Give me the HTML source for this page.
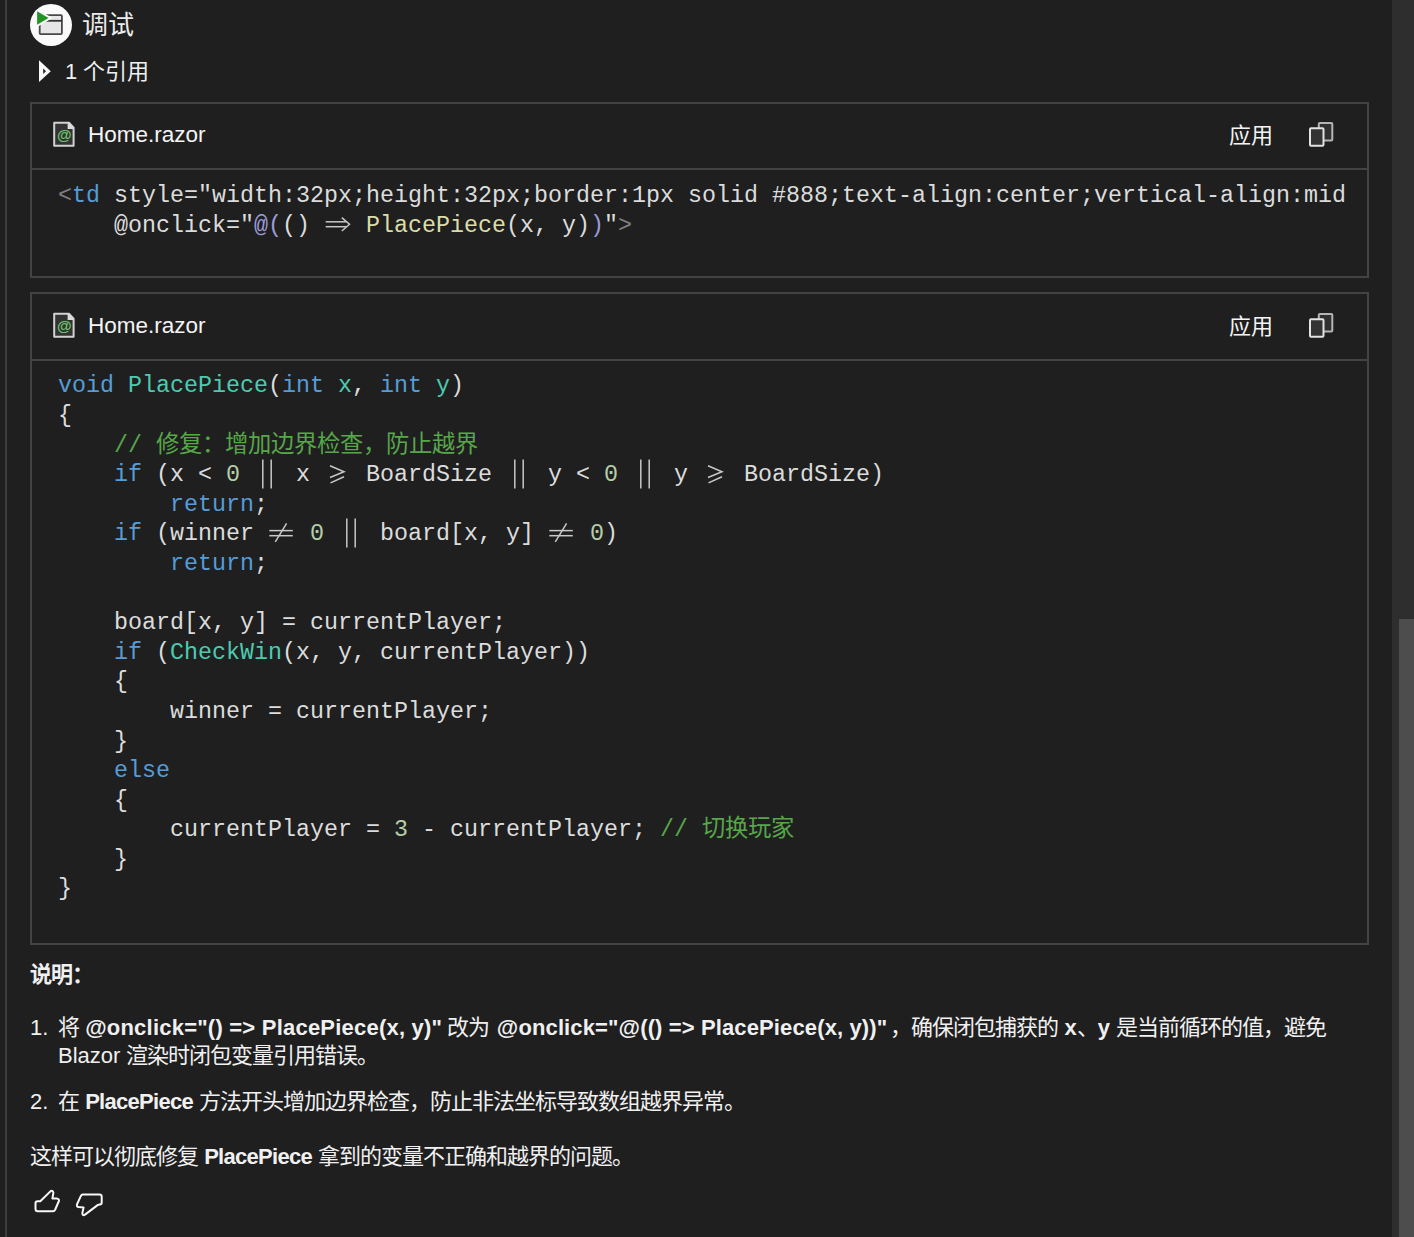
<!DOCTYPE html>
<html lang="zh-CN"><head><meta charset="utf-8">
<style>
html,body{margin:0;padding:0;}
body{width:1414px;height:1237px;overflow:hidden;background:#1f1f1f;position:relative;font-family:"Liberation Sans",sans-serif;color:#f0f0f0;}
.abs{position:absolute;}
#lline{left:5px;top:0;width:2px;height:1237px;background:#3d3d3d;}
#track{left:1392px;top:0;width:22px;height:1237px;background:#2e2e2e;}
#thumb{left:1399px;top:619px;width:15px;height:618px;background:#4d4d4d;}
.box{position:absolute;left:30px;width:1335px;border:2px solid #434343;}
.hdr{position:relative;height:64px;border-bottom:2px solid #434343;}
.h2>*{margin-top:1px;}
.fname{position:absolute;left:56px;top:16.5px;font-size:22.5px;line-height:28px;color:#f4f4f4;}
.apply{position:absolute;left:1197px;top:17.5px;font-size:22px;line-height:28px;color:#f4f4f4;}
.code{position:relative;font-family:"Liberation Mono",monospace;font-size:23.33px;line-height:29.6px;color:#dcdcdc;white-space:pre;padding-left:26px;}
.k{color:#569cd6}.t{color:#4ec9b0}.n{color:#b5cea8}.c{color:#57a64a}.g{color:#808080}.y{color:#dcdcaa}.p{color:#9b9bd8}
.lig{position:relative;}
.lig svg{position:absolute;left:0;top:19.4px;overflow:visible;stroke:#c8c8c8;stroke-width:1.5;}
.txt{position:absolute;left:30px;font-size:22px;line-height:28px;color:#f0f0f0;white-space:nowrap;}
b{font-weight:bold;}
.z{letter-spacing:-1px;}
.pp{letter-spacing:-0.7px;}
</style></head><body>
<div id="lline" class="abs"></div>
<div id="track" class="abs"></div>
<div id="thumb" class="abs"></div>

<!-- header -->
<svg class="abs" style="left:29px;top:3px" width="44" height="44" viewBox="0 0 44 44">
  <circle cx="22" cy="22" r="21" fill="#fafafa"/>
  <rect x="10.7" y="12.1" width="22.2" height="19" rx="1" fill="#e6e6e6" stroke="#484848" stroke-width="1.8"/>
  <line x1="10.7" y1="17.8" x2="32.9" y2="17.8" stroke="#333" stroke-width="1.8"/>
  <defs><clipPath id="cc"><circle cx="22" cy="22" r="21"/></clipPath></defs><polygon points="5.5,4.5 5.5,25.5 23.5,15" fill="#fafafa" clip-path="url(#cc)"/>
  <polygon points="8.1,8.2 8.1,21.8 19.5,15" fill="#239323"/>
</svg>
<div class="abs" style="left:82px;top:8px;font-size:26px;line-height:34px;color:#ececec;">调试</div>

<svg class="abs" style="left:36px;top:58px" width="18" height="26" viewBox="0 0 18 26">
  <path d="M3,2.2 L3,24 L14.8,13.2 Z M7.2,10.6 L7.2,15.9 L10,13.2 Z" fill="#f8f8f8" fill-rule="evenodd"/>
</svg>
<div class="abs" style="left:65px;top:58px;font-size:22px;line-height:28px;color:#f0f0f0;">1 个引用</div>

<!-- box 1 -->
<div class="box" style="top:102px;height:172px;">
  <div class="hdr">
        <div class="fname">Home.razor</div>
    <div class="apply">应用</div>
<svg class="abs" style="left:21px;top:17px" width="24" height="28" viewBox="0 0 24 28">
  <path d="M1.2,1.7 L16,1.7 L20.6,6.6 L20.6,24.7 L1.2,24.7 Z" fill="#333" stroke="#d2d2d2" stroke-width="2" stroke-linejoin="round"/>
  <polygon points="14.6,1.7 16,1.7 20.6,6.6 20.6,7.9 14.6,7.9" fill="#dcdcdc"/>
  <text x="11.2" y="19.3" text-anchor="middle" font-family="Liberation Sans" font-weight="bold" font-size="15" fill="#6cc46c">@</text>
</svg>
<svg class="abs" style="left:1274px;top:14px" width="30" height="30" viewBox="0 0 30 30">
  <rect x="12.8" y="4.9" width="13.5" height="17.5" rx="1" fill="#303030" stroke="#b4b4b4" stroke-width="2"/>
  <rect x="4" y="10.2" width="13.5" height="17.5" rx="1" fill="#333" stroke="#e2e2e2" stroke-width="2"/>
</svg>
  </div>
  <div class="code" style="padding-top:12.4px;"><span class="g">&lt;</span><span class="k">td</span> style="width:32px;height:32px;border:1px solid #888;text-align:center;vertical-align:mid
    @onclick="<span class="p">@(</span>() <span class="lig">  <svg width="28" height="40" viewBox="0 0 28 40"><line x1="1.7" y1="-10.2" x2="22" y2="-10.2"/><line x1="1.7" y1="-5.3" x2="22" y2="-5.3"/><polyline points="17.8,-14.4 25.5,-7.7 17.8,-1" fill="none"/></svg></span> <span class="y">PlacePiece</span>(x, y)<span class="p">)</span>"<span class="g">&gt;</span></div>
</div>

<!-- box 2 -->
<div class="box" style="top:292px;height:649px;">
  <div class="hdr h2" style="height:65px;">
    <div class="fname">Home.razor</div>
    <div class="apply">应用</div>
<svg class="abs" style="left:21px;top:17px" width="24" height="28" viewBox="0 0 24 28">
  <path d="M1.2,1.7 L16,1.7 L20.6,6.6 L20.6,24.7 L1.2,24.7 Z" fill="#333" stroke="#d2d2d2" stroke-width="2" stroke-linejoin="round"/>
  <polygon points="14.6,1.7 16,1.7 20.6,6.6 20.6,7.9 14.6,7.9" fill="#dcdcdc"/>
  <text x="11.2" y="19.3" text-anchor="middle" font-family="Liberation Sans" font-weight="bold" font-size="15" fill="#6cc46c">@</text>
</svg>
<svg class="abs" style="left:1274px;top:14px" width="30" height="30" viewBox="0 0 30 30">
  <rect x="12.8" y="4.9" width="13.5" height="17.5" rx="1" fill="#303030" stroke="#b4b4b4" stroke-width="2"/>
  <rect x="4" y="10.2" width="13.5" height="17.5" rx="1" fill="#333" stroke="#e2e2e2" stroke-width="2"/>
</svg>
  </div>
  <div class="code" style="padding-top:11.4px;"><span class="k">void</span> <span class="t">PlacePiece</span>(<span class="k">int</span> <span class="t">x</span>, <span class="k">int</span> <span class="t">y</span>)
{
    <span class="c">// 修复：增加边界检查，防止越界</span>
    <span class="k">if</span> (x &lt; <span class="n">0</span> <span class="lig">  <svg width="28" height="40" viewBox="0 0 28 40"><line x1="8.8" y1="-22.4" x2="8.8" y2="6.4"/><line x1="17.2" y1="-22.4" x2="17.2" y2="6.4"/></svg></span> x <span class="lig">  <svg width="28" height="40" viewBox="0 0 28 40"><polyline points="6,-16.3 20,-10.3 6,-4.5" fill="none"/><line x1="6.5" y1="0.9" x2="20" y2="-5.3"/></svg></span> BoardSize <span class="lig">  <svg width="28" height="40" viewBox="0 0 28 40"><line x1="8.8" y1="-22.4" x2="8.8" y2="6.4"/><line x1="17.2" y1="-22.4" x2="17.2" y2="6.4"/></svg></span> y &lt; <span class="n">0</span> <span class="lig">  <svg width="28" height="40" viewBox="0 0 28 40"><line x1="8.8" y1="-22.4" x2="8.8" y2="6.4"/><line x1="17.2" y1="-22.4" x2="17.2" y2="6.4"/></svg></span> y <span class="lig">  <svg width="28" height="40" viewBox="0 0 28 40"><polyline points="6,-16.3 20,-10.3 6,-4.5" fill="none"/><line x1="6.5" y1="0.9" x2="20" y2="-5.3"/></svg></span> BoardSize)
        <span class="k">return</span>;
    <span class="k">if</span> (winner <span class="lig">  <svg width="28" height="40" viewBox="0 0 28 40"><line x1="1.3" y1="-10.4" x2="24.8" y2="-10.4"/><line x1="1.3" y1="-5.3" x2="24.8" y2="-5.3"/><line x1="7.3" y1="0.8" x2="18.6" y2="-17.6"/></svg></span> <span class="n">0</span> <span class="lig">  <svg width="28" height="40" viewBox="0 0 28 40"><line x1="8.8" y1="-22.4" x2="8.8" y2="6.4"/><line x1="17.2" y1="-22.4" x2="17.2" y2="6.4"/></svg></span> board[x, y] <span class="lig">  <svg width="28" height="40" viewBox="0 0 28 40"><line x1="1.3" y1="-10.4" x2="24.8" y2="-10.4"/><line x1="1.3" y1="-5.3" x2="24.8" y2="-5.3"/><line x1="7.3" y1="0.8" x2="18.6" y2="-17.6"/></svg></span> <span class="n">0</span>)
        <span class="k">return</span>;

    board[x, y] = currentPlayer;
    <span class="k">if</span> (<span class="t">CheckWin</span>(x, y, currentPlayer))
    {
        winner = currentPlayer;
    }
    <span class="k">else</span>
    {
        currentPlayer = <span class="n">3</span> - currentPlayer; <span class="c">// 切换玩家</span>
    }
}</div>
</div>


<div class="txt" style="top:961px;"><b><span class="z">说明：</span></b></div>
<div class="txt" style="top:1014px;">1.</div>
<div class="txt" style="top:1014px;left:58px;"><span class="z">将</span> <b style="letter-spacing:0.22px">@onclick="() =&gt; PlacePiece(x, y)"</b> <span class="z" style="margin-left:-1.5px">改为</span> <b style="margin-left:1.8px;letter-spacing:0.125px">@onclick="@(() =&gt; PlacePiece(x, y))"</b><span class="z" style="margin-left:3px">，确保闭包捕获的</span> <b>x</b><span class="z">、</span><b>y</b> <span class="z">是当前循环的值，避免</span></div>
<div class="txt" style="top:1042px;left:58px;">Blazor <span class="z">渲染时闭包变量引用错误。</span></div>
<div class="txt" style="top:1088px;">2.</div>
<div class="txt" style="top:1088px;left:58px;"><span class="z">在</span> <b class="pp">PlacePiece</b> <span class="z">方法开头增加边界检查，防止非法坐标导致数组越界异常。</span></div>
<div class="txt" style="top:1143px;"><span class="z">这样可以彻底修复</span> <b class="pp">PlacePiece</b> <span class="z">拿到的变量不正确和越界的问题。</span></div>
<svg class="abs" style="left:30px;top:1186px" width="80" height="36" viewBox="0 0 80 36">
  <path d="M5.5,22.7 L5.5,17.3 Q5.5,15.3 7.5,15.3 L10.3,15.3 L20.1,5.6 Q22.6,3.6 23.4,6.7 L22.4,12.5 L26.6,12.5 Q29.6,12.9 28.9,15 L25,24 Q24.4,25.2 23,25.2 L7.8,25.2 Q5.5,25.2 5.5,22.7 Z" fill="none" stroke="#f8f8f8" stroke-width="2" stroke-linejoin="round"/>
  <path d="M52.8,8.6 L69.5,8.6 Q71.7,8.6 71.7,10.8 L71.7,16.5 Q71.7,18.4 69.8,18.6 L67.6,19.1 L55,28.6 Q52.2,30.4 52.4,26.8 L53.6,21.4 L48.8,21.1 Q46.2,20.7 47.1,18.2 L50.9,9.9 Q51.5,8.6 52.8,8.6 Z" fill="none" stroke="#f8f8f8" stroke-width="2" stroke-linejoin="round"/>
</svg>
</body></html>
